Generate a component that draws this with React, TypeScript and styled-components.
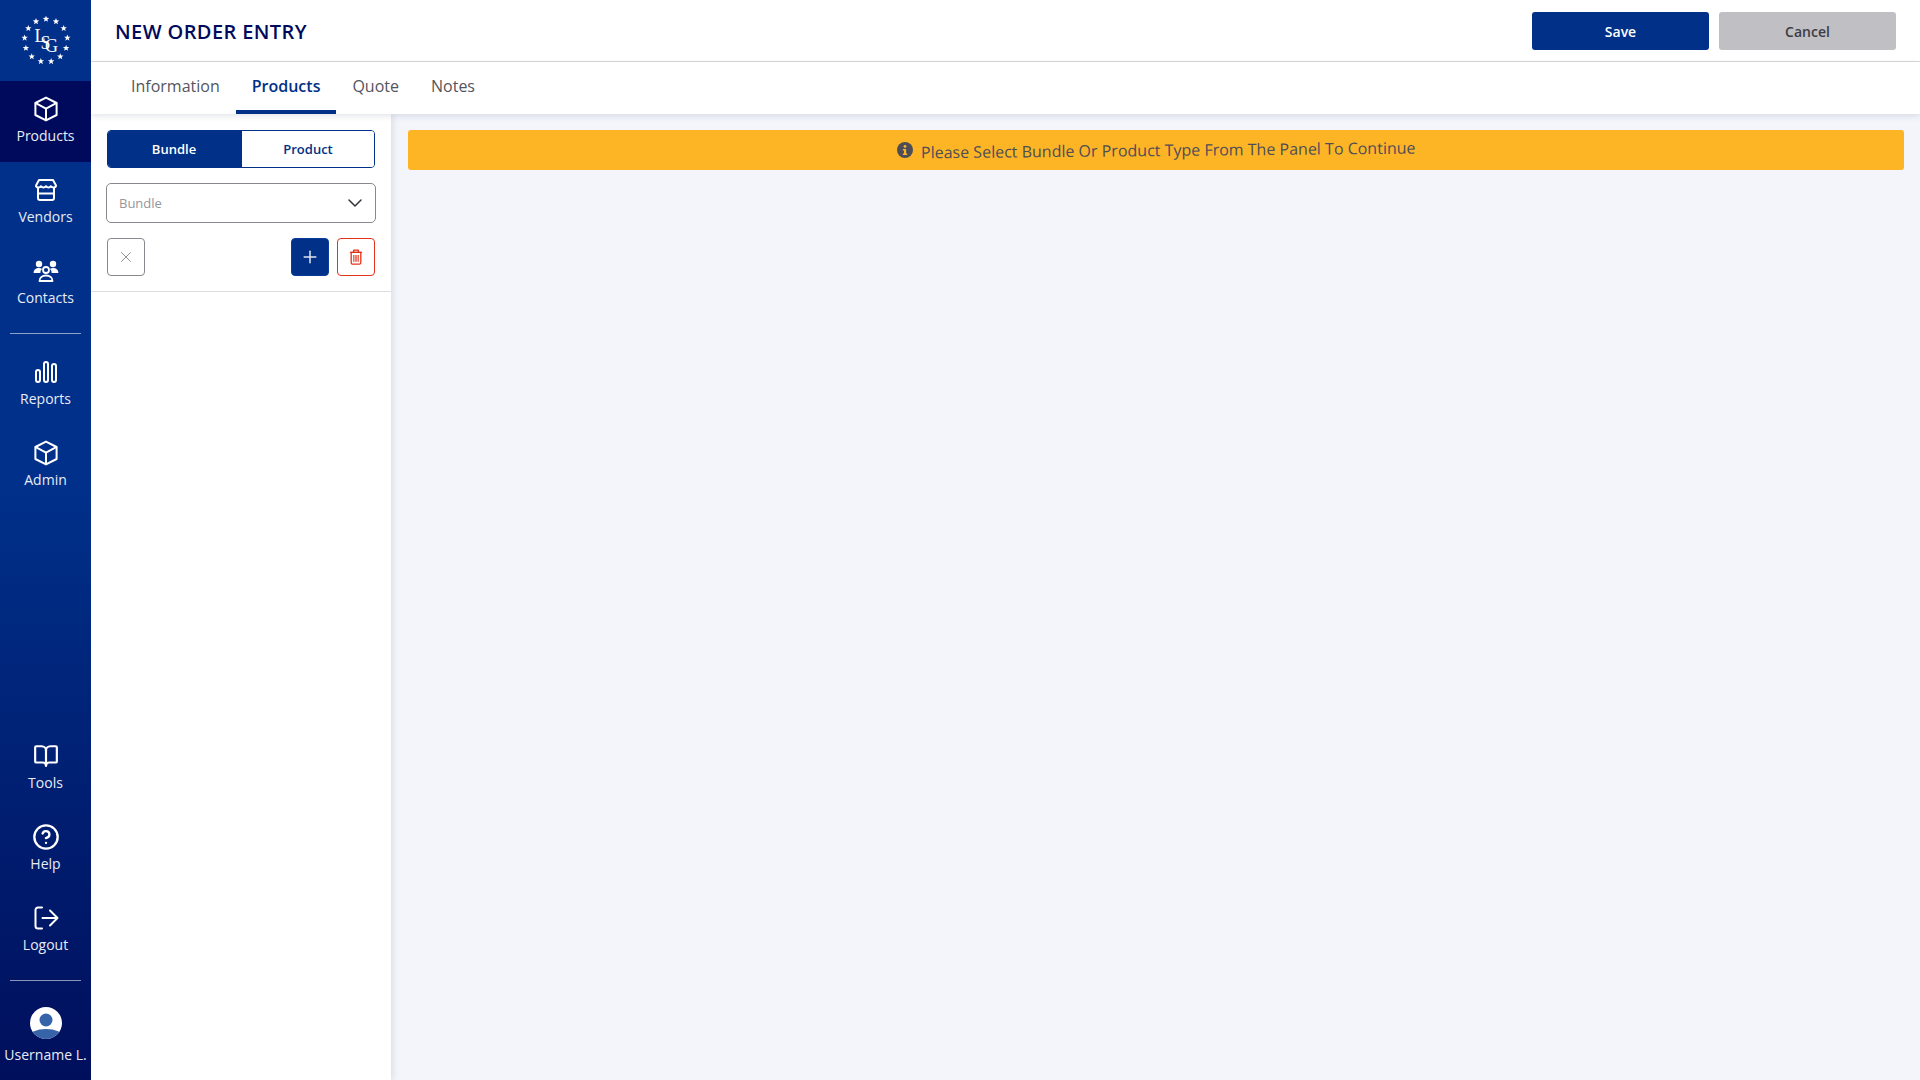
import React, { useState } from "react";
import styled, { createGlobalStyle } from "styled-components";
import { BookOpen, ChevronDown, CircleHelp, Plus, X } from "lucide-react";

const GlobalStyle = createGlobalStyle`
  html, body { margin: 0; padding: 0; height: 100%; }
  body { font-family: "Open Sans", "Liberation Sans", sans-serif; background: #f3f5fb; }
  * { box-sizing: border-box; }
`;

const BoxIcon = () => (
  <svg width="26" height="26" viewBox="0 0 26 26" fill="none" stroke="#fff" strokeWidth="2" strokeLinejoin="round" strokeLinecap="round">
    <path d="M13 1.6 23.6 7v12L13 24.4 2.4 19V7z" />
    <path d="M2.8 7.2 13 12.6l10.2-5.4M13 12.6v11.4" />
  </svg>
);

const StoreIcon = () => (
  <svg width="24" height="24" viewBox="0 0 24 24" fill="none" stroke="#fff" strokeWidth="2" strokeLinejoin="round" strokeLinecap="round">
    <path d="M5 2h14l3 5.500c0 1.600-1.500 2-2.500 2S17.500 9 17 8.200c-.6.800-1.600 1.300-2.500 1.300S12.600 9 12 8.200c-.6.800-1.600 1.300-2.500 1.300S7.500 9 7 8.200C6.500 9 5.500 9.500 4.500 9.500S2 9.100 2 7.500z" />
    <path d="M4 10v10a2 2 0 0 0 2 2h12a2 2 0 0 0 2-2V10M4 15.500h16" />
  </svg>
);

const ContactsIcon = () => (
  <svg width="26" height="22" viewBox="0 0 26 22" fill="#fff" stroke="none">
    <circle cx="6" cy="4" r="3.200" />
    <circle cx="20" cy="4" r="3.200" />
    <path d="M.6 13c0-3.300 2.300-5 5.400-5 1.300 0 2.400.3 3.200.9-1.300 1-1.900 2.400-1.800 4.100z" />
    <path d="M25.400 13c0-3.300-2.300-5-5.400-5-1.300 0-2.400.3-3.200.9 1.300 1 1.900 2.400 1.800 4.100z" />
    <circle cx="13" cy="10" r="3" fill="none" stroke="#fff" strokeWidth="1.800" />
    <path d="M6.500 21c0-3.500 2.800-5.500 6.500-5.500s6.500 2 6.500 5.500z" fill="none" stroke="#fff" strokeWidth="1.800" strokeLinejoin="round" />
  </svg>
);

const BarsIcon = () => (
  <svg width="22" height="22" viewBox="0 0 22 22" fill="none" stroke="#fff" strokeWidth="2">
    <rect x="1" y="9" width="4" height="12" rx="2" />
    <rect x="9" y="1" width="4" height="20" rx="2" />
    <rect x="17" y="3" width="4" height="18" rx="2" />
  </svg>
);

const LogoutIcon = () => (
  <svg width="26" height="24" viewBox="0 0 26 24" fill="none" stroke="#fff" strokeWidth="2" strokeLinecap="round" strokeLinejoin="round">
    <path d="M9 1.500H5a2.500 2.500 0 0 0-2.500 2.500v16A2.500 2.500 0 0 0 5 22.500h4" />
    <path d="M9.500 12h15M17 4.500l7.500 7.500-7.500 7.500" />
  </svg>
);

const AvatarIcon = () => (
  <svg width="32" height="32" viewBox="0 0 32 32">
    <defs>
      <clipPath id="avatar-clip">
        <circle cx="16" cy="16" r="16" />
      </clipPath>
    </defs>
    <circle cx="16" cy="16" r="16" fill="#fff" />
    <g clipPath="url(#avatar-clip)" fill="#3763a8">
      <circle cx="16" cy="13" r="6.500" />
      <ellipse cx="16" cy="30" rx="17" ry="8" />
    </g>
  </svg>
);

const TrashIcon = () => (
  <svg width="14" height="16" viewBox="0 0 14 16" fill="none" stroke="#e4321b" strokeWidth="1.300" strokeLinejoin="round">
    <path d="M1 3.300h12M4.700 3.200V1.200h4.600v2" />
    <path d="M2.200 3.300h9.600v10.400a1.500 1.500 0 0 1-1.500 1.500H3.700a1.500 1.500 0 0 1-1.500-1.500z" />
    <path d="M4.700 6v6.800M6.200 6v6.800M7.800 6v6.800M9.300 6v6.800" strokeWidth="0.900" />
  </svg>
);

const InfoDot = () => (
  <svg width="16" height="16" viewBox="0 0 16 16">
    <circle cx="8" cy="8" r="8" fill="#4d4d57" />
    <circle cx="8" cy="4.400" r="1.400" fill="#fdb526" />
    <path d="M5.900 7h3.200v4.600h1.100v1.500H5.900v-1.500h1.100V8.500H5.900z" fill="#fdb526" />
  </svg>
);

const STARS = Array.from({ length: 13 }, (_, i) => {
  const a = (i / 13) * Math.PI * 2 - Math.PI / 2;
  return { x: 25 + 21.500 * Math.cos(a), y: 24.500 + 21.500 * Math.sin(a) };
});

const starPoints = (cx: number, cy: number, r: number) =>
  Array.from({ length: 10 }, (_, i) => {
    const a = (i / 10) * Math.PI * 2 - Math.PI / 2;
    const d = i % 2 === 0 ? r : r * 0.42;
    return `${(cx + d * Math.cos(a)).toFixed(2)},${(cy + d * Math.sin(a)).toFixed(2)}`;
  }).join(" ");

const Logo = () => (
  <svg width="50" height="50" viewBox="0 0 50 50">
    {STARS.map((s, i) => (
      <polygon key={i} points={starPoints(s.x, s.y, 3.400)} fill="#fff" />
    ))}
    <g fontFamily="'Liberation Serif', serif" fill="#fff" fontSize="18">
      <text x="13.500" y="26">L</text>
      <text x="19.500" y="33">S</text>
      <text x="24" y="36">G</text>
    </g>
  </svg>
);

const Shell = styled.div`
  display: flex;
  width: 100%;
  height: 100vh;
  overflow: hidden;
`;

const Sidebar = styled.nav`
  width: 91px;
  flex: none;
  display: flex;
  flex-direction: column;
  background: linear-gradient(180deg, #00308a 0%, #00308a 45%, #000f5c 100%);
  z-index: 3;
`;

const LogoBox = styled.div`
  height: 81px;
  display: flex;
  align-items: center;
  justify-content: center;
`;

const NavItem = styled.a<{ $active?: boolean; $low?: boolean }>`
  height: 81px;
  display: flex;
  flex-direction: column;
  align-items: center;
  justify-content: flex-start;
  padding-top: ${(p) => (p.$low ? 13 : 15)}px;
  color: #e8ecf5;
  background: ${(p) => (p.$active ? "#000a5c" : "transparent")};
  font-size: 14px;
  line-height: 19px;
`;

const NavIcon = styled.span`
  height: 26px;
  display: flex;
  align-items: center;
  justify-content: center;
  margin-bottom: 4px;
  color: #fff;
`;

const NavDivider = styled.div<{ $before: number; $after: number }>`
  height: 1px;
  margin: ${(p) => p.$before}px 10px ${(p) => p.$after}px;
  background: rgba(255, 255, 255, 0.55);
`;

const Spacer = styled.div`
  flex: 1;
`;

const BottomNav = styled.div`
  display: flex;
  flex-direction: column;
`;

const User = styled.div`
  height: 99px;
  display: flex;
  flex-direction: column;
  align-items: center;
  padding-top: 26px;
  color: #e8ecf5;
  font-size: 14px;
  line-height: 19px;
  white-space: nowrap;
  svg { margin-bottom: 6px; }
`;

const Content = styled.div`
  flex: 1;
  min-width: 0;
  display: flex;
  flex-direction: column;
`;

const TopBar = styled.header`
  height: 62px;
  flex: none;
  display: flex;
  align-items: center;
  justify-content: space-between;
  padding: 0 24px;
  background: #fff;
  border-bottom: 1px solid #d9d9dc;
`;

const Title = styled.h1`
  margin: 2px 0 0;
  font-size: 20px;
  font-weight: 600;
  letter-spacing: 0.4px;
  color: #000a5c;
`;

const Actions = styled.div`
  display: flex;
  gap: 10px;
`;

const ActionButton = styled.button<{ $primary?: boolean }>`
  width: 177px;
  height: 38px;
  padding: 1px 0 0;
  border: none;
  border-radius: 3px;
  font-family: inherit;
  font-size: 14px;
  font-weight: 600;
  background: ${(p) => (p.$primary ? "#003087" : "#c0bfc4")};
  color: ${(p) => (p.$primary ? "#fff" : "#3c3c44")};
`;

const Tabs = styled.div`
  height: 52px;
  flex: none;
  display: flex;
  padding-left: 24px;
  background: #fff;
  box-shadow: 0 2px 6px rgba(20, 30, 70, 0.12);
  position: relative;
  z-index: 2;
`;

const Tab = styled.div<{ $active?: boolean }>`
  height: 52px;
  padding: 0 16px;
  display: flex;
  align-items: center;
  font-size: 16px;
  font-weight: ${(p) => (p.$active ? 600 : 400)};
  color: ${(p) => (p.$active ? "#003087" : "#55555e")};
  border-bottom: 4px solid ${(p) => (p.$active ? "#003087" : "transparent")};
`;

const Body = styled.div`
  flex: 1;
  min-height: 0;
  display: flex;
`;

const Panel = styled.aside`
  width: 300px;
  flex: none;
  background: #fff;
  box-shadow: 2px 0 6px rgba(20, 30, 70, 0.1);
  z-index: 1;
`;

const PanelHead = styled.div`
  padding: 16px 16px 15px;
  display: flex;
  flex-direction: column;
  border-bottom: 1px solid #dedee2;
`;

const Toggle = styled.div`
  display: flex;
  height: 38px;
  border: 1px solid #003087;
  border-radius: 4px;
  overflow: hidden;
`;

const ToggleOption = styled.button<{ $active?: boolean }>`
  flex: ${(p) => (p.$active ? "0 0 134px" : 1)};
  padding: 0 ${(p) => (p.$active ? 2 : 0)}px 0 0;
  border: none;
  font-family: inherit;
  font-size: 13px;
  font-weight: 600;
  background: ${(p) => (p.$active ? "#003087" : "#fff")};
  color: ${(p) => (p.$active ? "#fff" : "#003087")};
`;

const Select = styled.div`
  height: 40px;
  margin: 15px -1px;
  padding: 0 8px 0 12px;
  display: flex;
  align-items: center;
  justify-content: space-between;
  border: 1px solid #88888e;
  border-radius: 5px;
  font-size: 13px;
  color: #96969c;
  svg { color: #33333a; }
`;

const ToolRow = styled.div`
  display: flex;
  gap: 8px;
`;

const IconButton = styled.button<{ $variant: "ghost" | "primary" | "danger" }>`
  width: 38px;
  height: 38px;
  padding: 0;
  display: flex;
  align-items: center;
  justify-content: center;
  border-radius: 4px;
  background: ${(p) => (p.$variant === "primary" ? "#003087" : "#fff")};
  color: ${(p) => (p.$variant === "primary" ? "#dfe4ee" : "#8f8f95")};
  border: 1px solid
    ${(p) =>
      p.$variant === "primary" ? "#0a3d9c" : p.$variant === "danger" ? "#e4321b" : "#88888e"};
  &:first-child { margin-right: auto; }
`;

const Main = styled.main`
  flex: 1;
  min-width: 0;
  padding: 16px 16px 0 17px;
`;

const Alert = styled.div`
  height: 40px;
  display: flex;
  align-items: center;
  justify-content: center;
  gap: 8px;
  border-radius: 3px;
  background: #fdb526;
  color: #4d4d57;
  font-size: 16px;
  svg { margin-top: -1px; }
`;

const AlertText = styled.span`
  display: inline-block;
  transform: rotate(-0.55deg);
`;

export default function App() {
  const [mode, setMode] = useState<"bundle" | "product">("bundle");

  return (
    <>
      <GlobalStyle />
      <Shell>
        <Sidebar>
          <LogoBox>
            <Logo />
          </LogoBox>
          <NavItem $active>
            <NavIcon><BoxIcon /></NavIcon>
            Products
          </NavItem>
          <NavItem>
            <NavIcon><StoreIcon /></NavIcon>
            Vendors
          </NavItem>
          <NavItem>
            <NavIcon><ContactsIcon /></NavIcon>
            Contacts
          </NavItem>
          <NavDivider $before={9} $after={10} />
          <NavItem>
            <NavIcon><BarsIcon /></NavIcon>
            Reports
          </NavItem>
          <NavItem>
            <NavIcon><BoxIcon /></NavIcon>
            Admin
          </NavItem>
          <Spacer />
          <BottomNav>
            <NavItem $low>
              <NavIcon><BookOpen size={26} strokeWidth={2} /></NavIcon>
              Tools
            </NavItem>
            <NavItem $low>
              <NavIcon><CircleHelp size={28} strokeWidth={2} /></NavIcon>
              Help
            </NavItem>
            <NavItem $low>
              <NavIcon><LogoutIcon /></NavIcon>
              Logout
            </NavItem>
            <NavDivider $before={7} $after={0} />
            <User>
              <AvatarIcon />
              Username L.
            </User>
          </BottomNav>
        </Sidebar>
        <Content>
          <TopBar>
            <Title>NEW ORDER ENTRY</Title>
            <Actions>
              <ActionButton $primary>Save</ActionButton>
              <ActionButton>Cancel</ActionButton>
            </Actions>
          </TopBar>
          <Tabs>
            <Tab>Information</Tab>
            <Tab $active>Products</Tab>
            <Tab>Quote</Tab>
            <Tab>Notes</Tab>
          </Tabs>
          <Body>
            <Panel>
              <PanelHead>
                <Toggle>
                  <ToggleOption $active={mode === "bundle"} onClick={() => setMode("bundle")}>Bundle</ToggleOption>
                  <ToggleOption $active={mode === "product"} onClick={() => setMode("product")}>Product</ToggleOption>
                </Toggle>
                <Select>
                  Bundle
                  <ChevronDown size={24} strokeWidth={1.5} />
                </Select>
                <ToolRow>
                  <IconButton $variant="ghost"><X size={18} strokeWidth={1.3} /></IconButton>
                  <IconButton $variant="primary"><Plus size={20} strokeWidth={1.8} /></IconButton>
                  <IconButton $variant="danger"><TrashIcon /></IconButton>
                </ToolRow>
              </PanelHead>
            </Panel>
            <Main>
              <Alert>
                <InfoDot />
                <AlertText>Please Select Bundle Or Product Type From The Panel To Continue</AlertText>
              </Alert>
            </Main>
          </Body>
        </Content>
      </Shell>
    </>
  );
}
